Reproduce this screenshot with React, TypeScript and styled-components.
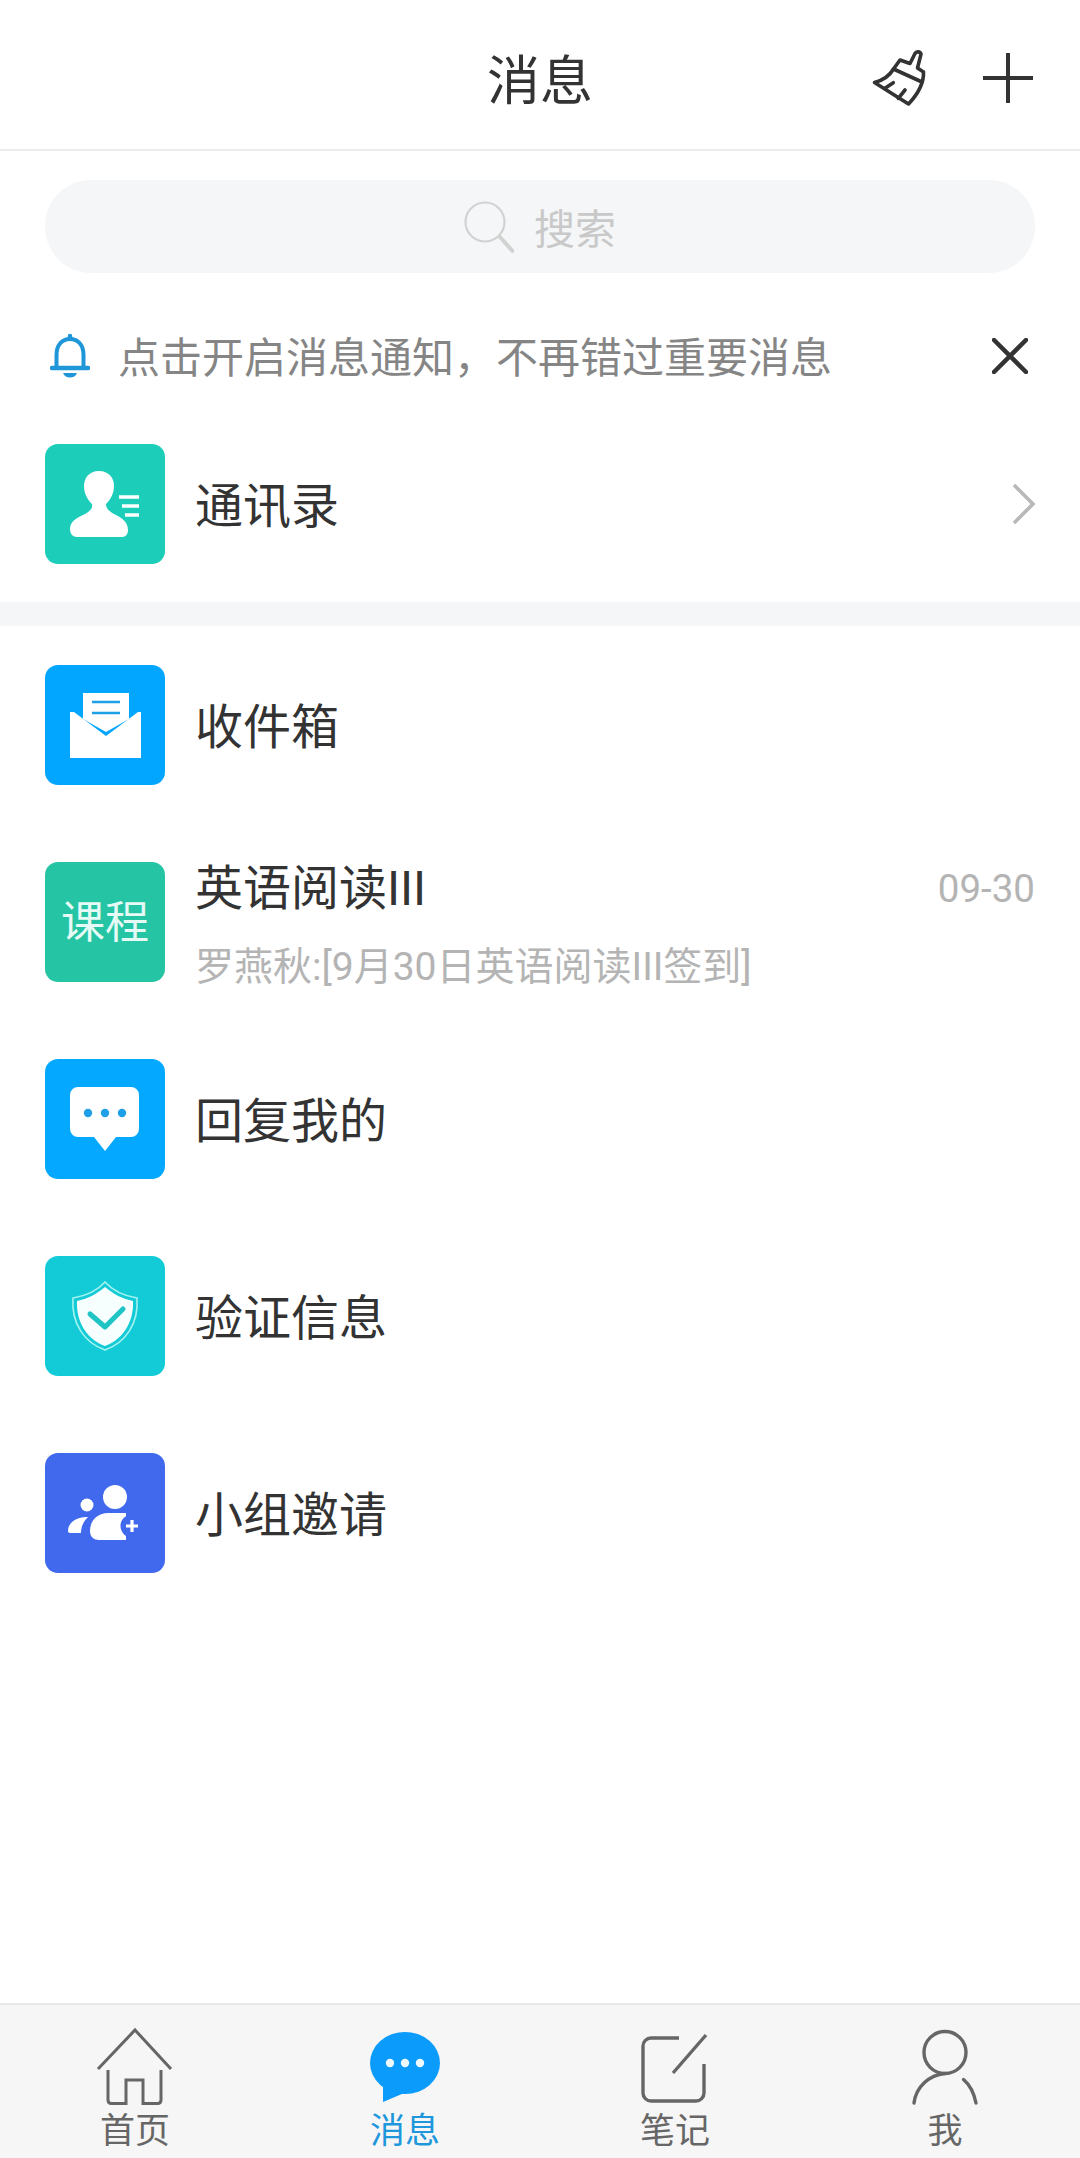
import React from 'react'
import styled, { createGlobalStyle } from 'styled-components'

const GlobalStyle = createGlobalStyle`
  html, body {
    margin: 0;
    padding: 0;
    background: #fff;
  }
  body {
    font-family: Roboto, "Noto Sans CJK SC", sans-serif;
    color: #333;
  }
`

const Page = styled.div`
  display: flex;
  flex-direction: column;
  width: 1080px;
  height: 2158px;
  overflow: hidden;
  background: #fff;
`

const Header = styled.header`
  position: relative;
  display: flex;
  align-items: center;
  justify-content: flex-end;
  flex: none;
  height: 149px;
  border-bottom: 2px solid #ececec;
  box-sizing: content-box;
`

const Title = styled.h1`
  position: absolute;
  left: 0;
  right: 0;
  top: 52px;
  margin: 0;
  font-size: 53px;
  line-height: 60px;
  font-weight: 400;
  text-align: center;
  color: #333;
`

const HeaderActions = styled.div`
  display: flex;
  align-items: center;
  gap: 53px;
  padding-right: 47px;
  margin-top: 6px;
`

const SearchBar = styled.div`
  display: flex;
  align-items: center;
  justify-content: center;
  gap: 20px;
  flex: none;
  height: 93px;
  margin: 29px 45px 0;
  border-radius: 46px;
  background: #f4f6f7;
`

const SearchText = styled.span`
  padding-top: 6px;
  font-size: 41px;
  line-height: 50px;
  color: #c9c9c9;
`

const Notice = styled.div`
  display: flex;
  align-items: center;
  flex: none;
  height: 66px;
  margin: 50px 0 16px;
  padding: 0 52px 0 50px;
`

const NoticeText = styled.span`
  flex: 1;
  margin-left: 28px;
  padding-top: 6px;
  font-size: 42px;
  line-height: 60px;
  color: #858585;
`

const Divider = styled.div`
  flex: none;
  height: 24px;
  background: #f5f6f7;
`

const List = styled.div`
  flex: 1;
`

const Row = styled.div`
  display: flex;
  align-items: center;
  height: 197px;
  padding: 0 45px;
`

const Tile = styled.div<{ $bg: string; $text?: boolean }>`
  display: flex;
  align-items: center;
  justify-content: center;
  flex: none;
  width: 120px;
  height: 120px;
  padding-bottom: ${p => (p.$text ? '6px' : '0')};
  box-sizing: border-box;
  border-radius: 13px;
  background: ${p => p.$bg};
  font-size: 44px;
  color: #e6fbf5;
`

const RowBody = styled.div`
  flex: 1;
  display: flex;
  flex-direction: column;
  margin-left: 30px;
  padding-top: 6px;
  min-width: 0;
`

const RowTitle = styled.div`
  font-size: 48px;
  line-height: 60px;
  color: #333;
`

const RowTop = styled.div`
  display: flex;
  align-items: center;
  justify-content: space-between;
  margin: 6px 0 18px;
`

const RowDate = styled.span`
  font-size: 38.5px;
  line-height: 60px;
  color: #b4b4b4;
`

const RowSub = styled.div`
  font-size: 39px;
  line-height: 60px;
  color: #b4b4b4;
`

const TabBar = styled.nav`
  display: grid;
  grid-template-columns: repeat(4, 270px);
  flex: none;
  height: 153px;
  border-top: 2px solid #e8e8e8;
  background: #f6f6f6;
`

const Tab = styled.div<{ $active?: boolean }>`
  display: flex;
  flex-direction: column;
  align-items: center;
  padding-top: 22px;
  color: ${p => (p.$active ? '#1f97dc' : '#666')};
`

const TabLabel = styled.span`
  margin-top: 5px;
  font-size: 35px;
  line-height: 40px;
`

const Icon = styled.svg`
  display: block;
  flex: none;
`

const BroomIcon = () => (
  <Icon width="60" height="60" viewBox="0 0 60 60" fill="none" stroke="#333" strokeWidth="3.6" strokeLinejoin="round" strokeLinecap="round">
    <path d="M30 12 L40 15.5 L45 5.5 a3.3 3.3 0 0 1 6 .6 L47.5 20 L53.5 24 C54 36 47 47 38.5 56 L4.5 34.5 C14 32 20 27 23.5 21 Z" />
    <path d="M23.5 21 L52 34 M15 40.3 L23.3 34.7 M28.3 50.3 L35 42" />
  </Icon>
)

const PlusIcon = () => (
  <Icon width="50" height="50" viewBox="0 0 50 50" stroke="#333" strokeWidth="4">
    <path d="M25 0 V50 M0 25 H50" />
  </Icon>
)

const SearchIcon = () => (
  <Icon width="50" height="54" viewBox="0 0 50 54" fill="none" stroke="#d2d2d2" strokeWidth="2.2" strokeLinecap="round">
    <circle cx="21" cy="22" r="19.5" />
    <path d="M36 37 L48.5 51" strokeWidth="4" />
  </Icon>
)

const BellIcon = () => (
  <Icon width="40" height="46" viewBox="0 0 40 46" fill="none" stroke="#1e96d8" strokeWidth="4" strokeLinecap="round">
    <path d="M6.5 33 V22 C6.5 12 12 6 20 6 C28 6 33.5 12 33.5 22 V33" />
    <path d="M20 3 V6 M2 35 H38" strokeWidth="4.5" />
    <path d="M13 40 H27 C25 46 15 46 13 40 Z" fill="#1e96d8" stroke="none" />
  </Icon>
)

const CloseIcon = () => (
  <Icon width="36" height="36" viewBox="0 0 36 36" stroke="#333" strokeWidth="4.5" strokeLinecap="round">
    <path d="M2 2 L34 34 M34 2 L2 34" />
  </Icon>
)

const ChevronIcon = () => (
  <Icon width="24" height="42" viewBox="0 0 24 42" fill="none" stroke="#b8b8b8" strokeWidth="3.6">
    <path d="M3 2 L22 21 L3 40" />
  </Icon>
)

const ContactGlyph = () => (
  <Icon width="120" height="120" viewBox="0 0 120 120">
    <path
      fill="#fff"
      d="M54 27 C44 27 39 34 39 42 C39 50 43 56 47 60 C48 65 44 68 38 71 C31 74 25 78 25 85 C25 90 28 93 32 93 H77 C81 93 83 90 83 86 C83 78 77 74 71 71 C65 68 61 65 61 60 C65 56 69 50 69 42 C69 34 64 27 54 27 Z"
    />
    <path d="M74 53 H94 M77 62 H94 M80 71 H94" stroke="#fff" strokeWidth="3.4" />
  </Icon>
)

const InboxGlyph = () => (
  <Icon width="120" height="120" viewBox="0 0 120 120">
    <path fill="#fff" d="M25 47 H29 L61 71 L93 47 H96 V93 H25 Z" />
    <path fill="#fff" d="M38 28 H84 V54 L61 67 L38 54 Z" />
    <path d="M47 37 H75 M47 48 H75" stroke="#1f9fe6" strokeWidth="2.6" />
  </Icon>
)

const ReplyGlyph = () => (
  <Icon width="120" height="120" viewBox="0 0 120 120">
    <path fill="#fff" d="M33 28 H86 a8 8 0 0 1 8 8 V70 a8 8 0 0 1 -8 8 H71 L60 92 L49 78 H33 a8 8 0 0 1 -8 -8 V36 a8 8 0 0 1 8 -8 Z" />
    <circle cx="43" cy="54" r="4.2" fill="#1f9fe6" />
    <circle cx="60" cy="54" r="4.2" fill="#1f9fe6" />
    <circle cx="77" cy="54" r="4.2" fill="#1f9fe6" />
  </Icon>
)

const ShieldGlyph = () => (
  <Icon width="120" height="120" viewBox="0 0 120 120">
    <path fill="none" stroke="#a5f3f0" strokeWidth="1.6" d="M60 26 C68 35 80 40 92 42 C94 68 80 87 60 94 C40 87 26 68 28 42 C40 40 52 35 60 26 Z" />
    <path fill="#f6fefe" d="M60 31 C68 38 78 43 88 45 C89 67 77 84 60 90 C43 84 31 67 32 45 C42 43 52 38 60 31 Z" />
    <path d="M45 58 L60 71 L78 53" fill="none" stroke="#1fc4c4" strokeWidth="5" strokeLinecap="round" strokeLinejoin="round" />
  </Icon>
)

const GroupGlyph = () => (
  <Icon width="120" height="120" viewBox="0 0 120 120">
    <circle cx="70" cy="44" r="12" fill="#fff" />
    <circle cx="42" cy="52" r="6.5" fill="#fff" />
    <path fill="#fff" d="M25 80 H36 C36 73 39 68 43 64 C33 63 23 69 23 78 C23 79 24 80 25 80 Z" />
    <path fill="#fff" d="M45 78 C45 67 53 60 63 60 H81 V87 H54 C49 87 45 84 45 78 Z" />
    <circle cx="87" cy="73" r="11.5" fill="#4169ee" />
    <path d="M87 67 V79 M81 73 H93" stroke="#fff" strokeWidth="3.2" />
  </Icon>
)

const HomeTabIcon = () => (
  <Icon width="80" height="80" viewBox="0 0 80 80" fill="none" stroke="#666" strokeWidth="3">
    <path d="M3 42 L40 3 L76 42" />
    <path d="M13 43 V73 q0 3.5 3.5 3.5 H31 V53 H48 V76.5 H62.5 q3.5 0 3.5 -3.5 V43" />
  </Icon>
)

const MessageTabIcon = () => (
  <Icon width="80" height="80" viewBox="0 0 80 80">
    <ellipse cx="40" cy="36" rx="35" ry="31" fill="#0b9bfb" />
    <path d="M18 56 V75 L44 64 Z" fill="#0b9bfb" />
    <circle cx="25" cy="36" r="4.2" fill="#eefaff" />
    <circle cx="40" cy="36" r="4.2" fill="#eefaff" />
    <circle cx="55" cy="36" r="4.2" fill="#eefaff" />
  </Icon>
)

const NoteTabIcon = () => (
  <Icon width="80" height="80" viewBox="0 0 80 80" fill="none" stroke="#666" strokeWidth="3.4">
    <path d="M44 11 H16 a8 8 0 0 0 -8 8 V66 a8 8 0 0 0 8 8 H61 a8 8 0 0 0 8 -8 V37" />
    <path d="M38 46 L71 8" />
  </Icon>
)

const MeTabIcon = () => (
  <Icon width="80" height="80" viewBox="0 0 80 80" fill="none" stroke="#666" strokeWidth="3.4" strokeLinecap="round">
    <circle cx="40" cy="25.5" r="21" />
    <path d="M9 76 C11 60 24 48 40 46.5" />
    <path d="M58.5 52.5 C65 58 69 66 71 76" />
  </Icon>
)

type ListRow = {
  title: string
  bg: string
  icon: React.ReactNode
}

const topRows: ListRow[] = [
  { title: '收件箱', bg: '#03a6fe', icon: <InboxGlyph /> },
]

const bottomRows: ListRow[] = [
  { title: '回复我的', bg: '#04a8ff', icon: <ReplyGlyph /> },
  { title: '验证信息', bg: '#13cbd6', icon: <ShieldGlyph /> },
  { title: '小组邀请', bg: '#4169ee', icon: <GroupGlyph /> },
]

const renderRow = (row: ListRow) => (
  <Row key={row.title}>
    <Tile $bg={row.bg}>{row.icon}</Tile>
    <RowBody>
      <RowTitle>{row.title}</RowTitle>
    </RowBody>
  </Row>
)

export default function App() {
  return (
    <Page>
      <GlobalStyle />
      <Header>
        <Title>消息</Title>
        <HeaderActions>
          <BroomIcon />
          <PlusIcon />
        </HeaderActions>
      </Header>

      <SearchBar>
        <SearchIcon />
        <SearchText>搜索</SearchText>
      </SearchBar>

      <Notice>
        <BellIcon />
        <NoticeText>点击开启消息通知，不再错过重要消息</NoticeText>
        <CloseIcon />
      </Notice>

      <Row>
        <Tile $bg="#1ccdb9"><ContactGlyph /></Tile>
        <RowBody>
          <RowTitle>通讯录</RowTitle>
        </RowBody>
        <ChevronIcon />
      </Row>

      <Divider />

      <List>
        {topRows.map(renderRow)}
        <Row>
          <Tile $bg="#25c4a4" $text>课程</Tile>
          <RowBody>
            <RowTop>
              <RowTitle>英语阅读III</RowTitle>
              <RowDate>09-30</RowDate>
            </RowTop>
            <RowSub>罗燕秋:[9月30日英语阅读III签到]</RowSub>
          </RowBody>
        </Row>
        {bottomRows.map(renderRow)}
      </List>

      <TabBar>
        <Tab>
          <HomeTabIcon />
          <TabLabel>首页</TabLabel>
        </Tab>
        <Tab $active>
          <MessageTabIcon />
          <TabLabel>消息</TabLabel>
        </Tab>
        <Tab>
          <NoteTabIcon />
          <TabLabel>笔记</TabLabel>
        </Tab>
        <Tab>
          <MeTabIcon />
          <TabLabel>我</TabLabel>
        </Tab>
      </TabBar>
    </Page>
  )
}
